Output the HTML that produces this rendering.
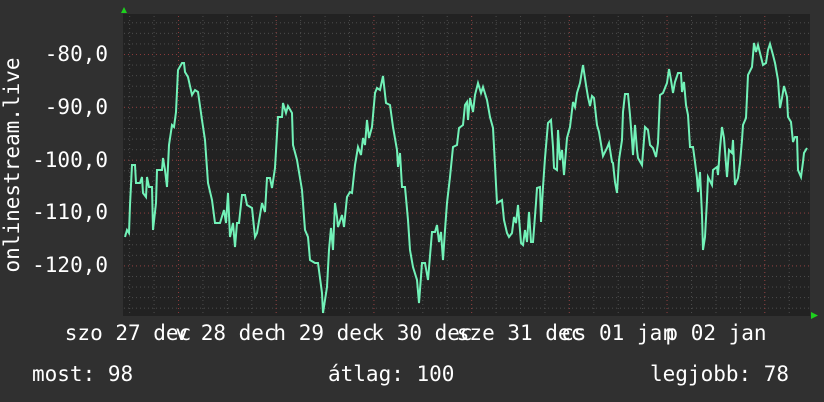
<!DOCTYPE html>
<html><head><meta charset="utf-8"><style>
html,body{margin:0;padding:0;background:#303030;}
svg{display:block;}
text{font-family:"DejaVu Sans Mono","Liberation Mono",monospace;font-size:21px;fill:#fff;}
</style></head><body>
<svg width="824" height="402" viewBox="0 0 824 402" xmlns="http://www.w3.org/2000/svg">
<defs>
<pattern id="hmin" x="0" y="54" width="4" height="10.57" patternUnits="userSpaceOnUse"><rect x="0" y="0" width="1" height="1" fill="#4c4c4c"/></pattern>
<pattern id="vmin" x="178" y="0" width="24.43" height="4" patternUnits="userSpaceOnUse"><rect x="0" y="0" width="1" height="1" fill="#4c4c4c"/></pattern>
<pattern id="hmaj" x="0" y="54" width="4" height="52.85" patternUnits="userSpaceOnUse"><rect x="0" y="0" width="1" height="1" fill="#8a3a3a"/></pattern>
<pattern id="vmaj" x="178" y="0" width="97.7" height="4" patternUnits="userSpaceOnUse"><rect x="0" y="0" width="1" height="1" fill="#8a3a3a"/></pattern>
</defs>
<rect x="0" y="0" width="824" height="402" fill="#303030"/>
<rect x="123" y="14" width="687" height="302" fill="#222"/>
<rect x="123" y="14" width="687" height="302" fill="url(#hmin)"/>
<rect x="123" y="14" width="687" height="302" fill="url(#vmin)"/>
<rect x="123" y="14" width="687" height="302" fill="url(#hmaj)"/>
<rect x="123" y="14" width="687" height="302" fill="url(#vmaj)"/>
<polygon points="121,13 124,7 127,13" fill="#1ed01e"/>
<polygon points="811,312 818,315.5 811,319" fill="#1ed01e"/>
<polyline fill="none" stroke="#72f2b8" stroke-width="2" stroke-linejoin="miter" points="125,237 127,230 129,233 130,205 132,165 135,165 136,183 140,183 142,177 143,193 146,197 147,177 149,187 152,187 153,230 156,203 157,170 162,170 163,158 165,170 167,187 169,145 172,125 174,127 176,112 178,70 182,63 184,63 185,72 188,77 192,95 195,90 198,92 202,120 205,140 208,183 212,200 215,223 220,223 224,210 226,223 228,193 230,237 233,223 235,247 237,223 239,223 242,195 245,195 247,205 252,208 255,237 257,233 262,203 265,212 267,178 270,178 272,188 275,168 278,117 282,117 283,103 286,113 288,106 292,113 293,145 297,160 302,190 305,230 308,237 310,260 315,263 318,263 322,293 323,313 327,287 329,250 331,228 333,250 335,203 337,217 338,227 342,215 344,227 347,197 350,192 352,193 355,165 358,147 361,155 363,138 365,145 367,120 369,138 372,127 375,93 377,88 380,90 383,76 386,103 390,105 393,127 397,150 398,167 400,153 402,187 405,187 408,220 410,250 413,267 417,280 419,303 422,263 425,263 428,280 432,232 435,232 437,225 439,242 441,232 443,260 445,230 447,203 450,177 453,147 457,145 459,128 463,125 465,105 467,102 468,120 470,98 473,112 475,95 478,83 481,93 483,87 487,100 490,117 493,128 497,203 502,200 504,220 507,233 509,237 512,233 514,217 516,223 518,205 521,243 523,245 525,230 527,242 529,212 531,242 533,242 536,203 537,188 540,187 541,222 543,187 545,158 548,123 551,120 553,147 554,168 557,170 558,130 560,160 562,150 564,175 567,138 570,127 573,102 575,107 577,93 580,83 583,65 586,85 588,97 590,106 592,96 594,98 597,125 599,132 602,150 603,156 607,148 609,143 612,162 613,163 615,182 617,193 619,160 622,140 623,112 625,94 628,94 630,115 632,140 633,155 635,125 637,150 638,158 642,165 645,127 648,130 650,145 653,148 656,157 658,143 660,95 663,93 665,88 667,83 669,69 671,80 673,93 675,82 678,73 681,73 682,92 684,82 686,105 688,115 690,147 693,147 695,162 697,178 698,192 700,172 702,215 703,250 705,237 707,200 708,177 712,185 713,170 717,167 718,175 720,148 722,127 724,138 727,177 729,150 732,153 733,140 735,185 738,178 740,163 742,140 743,125 746,118 748,75 752,67 754,43 756,52 758,45 760,53 763,65 766,63 768,50 770,44 773,55 775,63 778,80 780,108 782,98 784,86 787,97 788,117 791,122 793,142 795,137 797,137 798,170 801,177 803,162 804,153 807,148"/>
<g text-anchor="end">
<text x="108" y="61">-80,0</text>
<text x="108" y="114">-90,0</text>
<text x="108" y="167">-100,0</text>
<text x="108" y="219">-110,0</text>
<text x="108" y="272">-120,0</text>
</g>
<text transform="translate(19,165) rotate(-90)" text-anchor="middle">onlinestream.live</text>
<g text-anchor="middle">
<text x="128" y="340">szo 27 dec</text>
<text x="226" y="340">v 28 dec</text>
<text x="324" y="340">h 29 dec</text>
<text x="422" y="340">k 30 dec</text>
<text x="520" y="340">sze 31 dec</text>
<text x="618" y="340">cs 01 jan</text>
<text x="716" y="340">p 02 jan</text>
</g>
<text x="32" y="381">most: 98</text>
<text x="328" y="381">átlag: 100</text>
<text x="650" y="381">legjobb: 78</text>
</svg>
</body></html>
